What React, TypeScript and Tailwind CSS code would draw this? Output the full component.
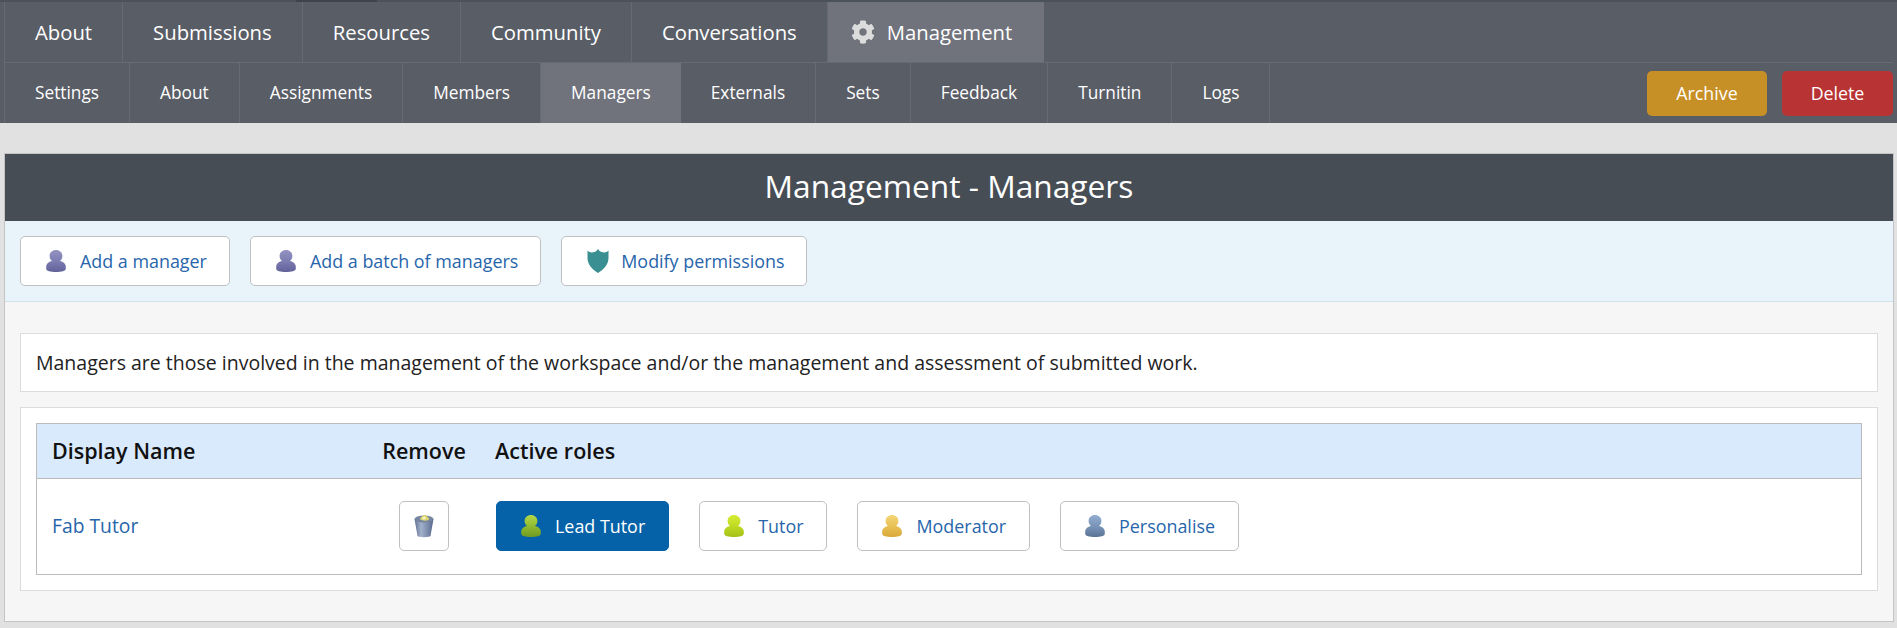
import { useId } from "react";
import { FaCog } from "react-icons/fa";

const mainTabs = ["About", "Submissions", "Resources", "Community", "Conversations"];
const subTabs = ["Settings", "About", "Assignments", "Members", "Managers", "Externals", "Sets", "Feedback", "Turnitin", "Logs"];

function Person({ top, mid, low }: { top: string; mid: string; low: string }) {
    const id = useId();
    return (
        <svg width="20" height="22" viewBox="0 0 20 22" className="shrink-0 blur-[0.5px]">
            <defs>
                <linearGradient id={id} x1="0" y1="0" x2="0" y2="1">
                    <stop offset="0" stopColor={top} />
                    <stop offset="0.55" stopColor={mid} />
                    <stop offset="1" stopColor={low} />
                </linearGradient>
            </defs>
            <path
                fill={`url(#${id})`}
                d="M10 0C13.6 0 16.4 2.6 16.4 5.9C16.4 8 15.4 9.8 14 10.9C17.2 11.6 19.8 13.6 19.8 16.6V18.8C19.8 20.9 15.5 22 10 22C4.5 22 0.2 20.9 0.2 18.8V16.6C0.2 13.6 2.8 11.6 6 10.9C4.6 9.8 3.6 8 3.6 5.9C3.6 2.6 6.4 0 10 0Z"
            />
        </svg>
    );
}

function Shield() {
    return (
        <svg width="22" height="24" viewBox="0 0 22 24" className="shrink-0 blur-[0.3px]">
            <path
                fill="#3a8f92"
                d="M0.5 1.5C2 3.5 5 4 7.5 3C9 2.5 10 1.5 11 0C12 1.5 13 2.5 14.5 3C17 4 20 3.5 21.5 1.5V9C21.5 15 17 20.5 11 24C5 20.5 0.5 15 0.5 9Z"
            />
        </svg>
    );
}

function Trash() {
    const id = useId();
    return (
        <svg width="20" height="24" viewBox="0 0 20 24" className="blur-[0.4px]">
            <defs>
                <linearGradient id={id} x1="0" y1="0" x2="1" y2="0">
                    <stop offset="0" stopColor="#5f7090" />
                    <stop offset="0.35" stopColor="#a2b1ca" />
                    <stop offset="0.7" stopColor="#7b8cab" />
                    <stop offset="1" stopColor="#56668a" />
                </linearGradient>
            </defs>
            <path fill={`url(#${id})`} d="M0.5 5L3.5 22C4 23.5 16 23.5 16.5 22L19.5 5Z" />
            <ellipse cx="10" cy="5" rx="9.5" ry="3.6" fill="#76859f" />
            <path fill="#dcd56e" d="M6 5C6.5 3 8 2.5 9 1.5C11 0.5 13 1.5 13.5 3C15 3.5 15.5 5 14.5 6C12 7 8 7 6 5Z" />
            <path fill="#f5f3c8" d="M8 3.5L11 2.5L12 5L9 5.5Z" />
        </svg>
    );
}

const managerIcon = <Person top="#9394c2" mid="#7a7ab0" low="#62629a" />;

function ActionButton({ children, label, gap }: { children: React.ReactNode; label: string; gap: string }) {
    return (
        <button className="flex h-[50px] items-center rounded-[5px] border border-[#c0c0c0] bg-white pl-[25px] pr-[22px] text-[17.9px] text-[#2765ab]">
            {children}
            <span className={gap}>{label}</span>
        </button>
    );
}

function RoleButton({ label, active, icon }: { label: string; active?: boolean; icon: React.ReactNode }) {
    return (
        <button
            className={
                active
                    ? "flex h-[50px] items-center rounded-[5px] border border-[#0562a8] bg-[#0562a8] pl-[24px] pr-[23px] text-[17.9px] text-white"
                    : "flex h-[50px] items-center rounded-[5px] border border-[#c0c0c0] bg-white pl-[24px] pr-[23px] text-[17.9px] text-[#2765ab]"
            }
        >
            {icon}
            <span className="ml-[14px]">{label}</span>
        </button>
    );
}

export default function App() {
    return (
        <div className="min-h-screen bg-[#e1e1e1] pb-[6px] font-['Open_Sans','Liberation_Sans',sans-serif]">
            {/* Top navigation */}
            <div className="bg-[#595d66]">
                <div className="flex h-[2px] bg-[#4b525a] pl-[296px]">
                    <div className="w-[81px] bg-[#3f444c]" />
                </div>
                <div className="ml-[4px] mr-[4px] border-l border-[#666a73]">
                    <div className="flex h-[61px] border-b border-[#666a73]">
                        {mainTabs.map((t) => (
                            <a key={t} className="flex items-center border-r border-[#666a73] px-[30px] text-[20.3px] text-white">
                                {t}
                            </a>
                        ))}
                        <a className="flex items-center bg-[#70737c] pl-[23px] pr-[32px] text-[20.3px] text-white">
                            <FaCog className="mr-[12px] text-[24px] text-[#dcdcdc]" />
                            Management
                        </a>
                    </div>
                    <div className="flex h-[60px] items-stretch">
                        {subTabs.map((t) => (
                            <a
                                key={t}
                                className={
                                    t === "Managers"
                                        ? "flex items-center bg-[#70737c] px-[30px] pb-[1px] pt-[1px] text-[17.3px] text-white"
                                        : "flex items-center border-r border-[#666a73] px-[30px] pb-[1px] pt-[1px] text-[17.3px] text-white"
                                }
                            >
                                {t}
                            </a>
                        ))}
                        <div className="ml-auto flex items-center gap-[15px] py-[1px]">
                            <button className="h-[45px] w-[120px] rounded-[5px] bg-[#c79026] text-[17.8px] text-white">Archive</button>
                            <button className="h-[45px] w-[111px] rounded-[5px] bg-[#b83333] text-[17.8px] text-white">Delete</button>
                        </div>
                    </div>
                </div>
            </div>

            {/* Panel */}
            <div className="ml-[4px] mr-[3px] mt-[30px] border border-[#c4c4c4] bg-[#f6f6f6] pb-[30px]">
                <h1 className="flex h-[66px] items-center justify-center bg-[#474d55] pb-[2px] text-[31.7px] font-normal text-white">
                    Management - Managers
                </h1>
                <div className="flex gap-[20px] border-b border-t border-b-[#cfe3ea] border-t-[#474d55] bg-[#e8f4fa] px-[15px] py-[15px]">
                    <ActionButton gap="ml-[14px]" label="Add a manager">{managerIcon}</ActionButton>
                    <ActionButton gap="ml-[14px]" label="Add a batch of managers">{managerIcon}</ActionButton>
                    <ActionButton gap="ml-[12px]" label="Modify permissions">
                        <Shield />
                    </ActionButton>
                </div>

                <div className="mx-[15px] mt-[31px] flex h-[59px] items-center border border-[#dcdcdc] bg-white px-[15px] text-[19.5px] text-[#222]">
                    Managers are those involved in the management of the workspace and/or the management and assessment of submitted work.
                </div>

                <div className="mx-[15px] mt-[15px] border border-[#dcdcdc] bg-white p-[15px]">
                    <div className="border border-[#bbbbbb]">
                        <div className="flex h-[55px] items-center border-b border-[#bbbbbb] bg-[#d9eafc] text-[21.5px] font-semibold text-[#111]">
                            <div className="w-[330px] pl-[15px]">Display Name</div>
                            <div className="w-[114px] text-center">Remove</div>
                            <div className="pl-[14px]">Active roles</div>
                        </div>
                        <div className="flex h-[95px] items-center pb-[1px]">
                            <div className="w-[330px] pl-[15px] text-[19.3px] text-[#2765ab]">Fab Tutor</div>
                            <div className="flex w-[114px] justify-center">
                                <button className="flex h-[50px] w-[50px] items-center justify-center rounded-[5px] border border-[#c0c0c0] bg-white">
                                    <Trash />
                                </button>
                            </div>
                            <div className="flex gap-[30px] pl-[15px]">
                                <RoleButton active label="Lead Tutor" icon={<Person top="#b2d84a" mid="#8fb82e" low="#6f9a20" />} />
                                <RoleButton label="Tutor" icon={<Person top="#d6ec34" mid="#bdd820" low="#a4c018" />} />
                                <RoleButton label="Moderator" icon={<Person top="#f3d678" mid="#e8bf52" low="#d9a73a" />} />
                                <RoleButton label="Personalise" icon={<Person top="#92add0" mid="#7692b6" low="#5a7394" />} />
                            </div>
                        </div>
                    </div>
                </div>
            </div>
        </div>
    );
}
